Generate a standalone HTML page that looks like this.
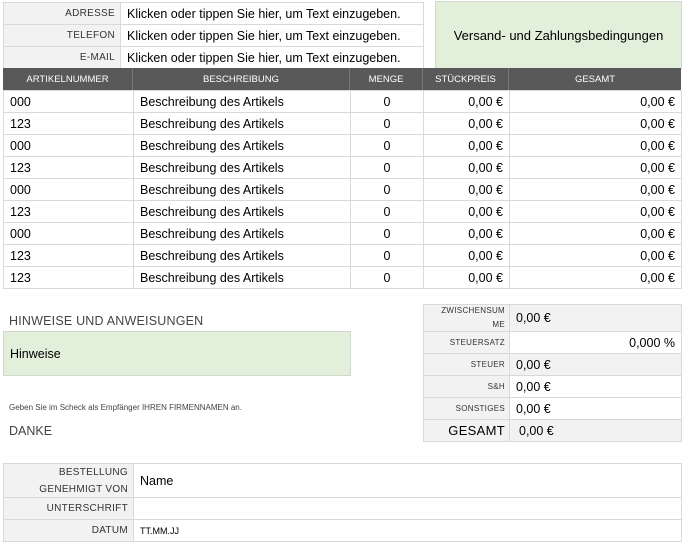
<!DOCTYPE html>
<html><head><meta charset="utf-8"><style>
*{margin:0;padding:0;box-sizing:border-box}
body{width:683px;height:543px;background:#fff;font-family:"Liberation Sans",sans-serif;color:#000;position:relative;overflow:hidden}
.c{position:absolute;border:1px solid #d9d9d9;display:flex;align-items:center;overflow:hidden;white-space:nowrap}
.g{background:#f2f2f2}
.l{justify-content:flex-end;padding-right:5px;font-size:10px;color:#333;letter-spacing:.3px}
.v{font-size:12.5px;padding-left:6px}
.r{justify-content:flex-end;padding-right:6px}
.m{justify-content:center}
.h{position:absolute;background:#595959;color:#fff;font-size:9.5px;display:flex;align-items:center;justify-content:center;border-right:1px solid #777;height:22px;top:68px}
.t{position:absolute;white-space:nowrap}
</style></head><body>
<div class="c g l" style="left:3px;top:2px;width:118px;height:23px">ADRESSE</div>
<div class="c v" style="left:120px;top:2px;width:304px;height:23px">Klicken oder tippen Sie hier, um Text einzugeben.</div>
<div class="c g l" style="left:3px;top:24px;width:118px;height:23px">TELEFON</div>
<div class="c v" style="left:120px;top:24px;width:304px;height:23px">Klicken oder tippen Sie hier, um Text einzugeben.</div>
<div class="c g l" style="left:3px;top:46px;width:118px;height:23px">E-MAIL</div>
<div class="c v" style="left:120px;top:46px;width:304px;height:23px">Klicken oder tippen Sie hier, um Text einzugeben.</div>
<div class="c m" style="left:435px;top:1px;width:247px;height:68px;background:#e2efda;font-size:13px;border-color:#d0d8cc">Versand- und Zahlungsbedingungen</div>

<div class="h" style="left:3px;width:130px">ARTIKELNUMMER</div>
<div class="h" style="left:133px;width:217px">BESCHREIBUNG</div>
<div class="h" style="left:350px;width:73px">MENGE</div>
<div class="h" style="left:423px;width:86px">STÜCKPREIS</div>
<div class="h" style="left:509px;width:172px;border:none">GESAMT</div>

<div id="rows"></div>
<script>
var ids=["000","123","000","123","000","123","000","123","123"],h="";
for(var i=0;i<9;i++){var y=90+i*22;
h+='<div class="c v" style="left:3px;top:'+y+'px;width:131px;height:23px">'+ids[i]+'</div>';
h+='<div class="c v" style="left:133px;top:'+y+'px;width:218px;height:23px">Beschreibung des Artikels</div>';
h+='<div class="c v m" style="left:350px;top:'+y+'px;width:74px;height:23px;padding:0">0</div>';
h+='<div class="c v r" style="left:423px;top:'+y+'px;width:87px;height:23px">0,00 €</div>';
h+='<div class="c v r" style="left:509px;top:'+y+'px;width:173px;height:23px">0,00 €</div>';}
document.getElementById("rows").innerHTML=h;
</script>

<div class="t" style="left:9px;top:314px;font-size:12.5px;color:#444;letter-spacing:.2px">HINWEISE UND ANWEISUNGEN</div>
<div class="c v" style="left:3px;top:331px;width:348px;height:45px;background:#e2efda;border-color:#cfd8ca;font-size:12.5px">Hinweise</div>
<div class="t" style="left:9px;top:403px;font-size:8px;color:#444">Geben Sie im Scheck als Empfänger IHREN FIRMENNAMEN an.</div>
<div class="t" style="left:9px;top:424px;font-size:12.5px;color:#444">DANKE</div>

<div class="c g l" style="left:423px;top:304px;width:87px;height:28px;font-size:8px;white-space:normal;text-align:right;line-height:14px;padding-right:4px">ZWISCHENSUM<br>ME</div>
<div class="c g v" style="left:509px;top:304px;width:173px;height:28px">0,00 €</div>
<div class="c g l" style="left:423px;top:331px;width:87px;height:23px;font-size:8px;padding-right:4px">STEUERSATZ</div>
<div class="c v r" style="left:509px;top:331px;width:173px;height:23px">0,000 %</div>
<div class="c g l" style="left:423px;top:353px;width:87px;height:23px;font-size:8px;padding-right:4px">STEUER</div>
<div class="c g v" style="left:509px;top:353px;width:173px;height:23px">0,00 €</div>
<div class="c g l" style="left:423px;top:375px;width:87px;height:23px;font-size:8px;padding-right:4px">S&amp;H</div>
<div class="c v" style="left:509px;top:375px;width:173px;height:23px">0,00 €</div>
<div class="c g l" style="left:423px;top:397px;width:87px;height:23px;font-size:8px;padding-right:4px">SONSTIGES</div>
<div class="c v" style="left:509px;top:397px;width:173px;height:23px">0,00 €</div>
<div class="c g l" style="left:423px;top:419px;width:87px;height:23px;font-size:13px;color:#000;padding-right:4px">GESAMT</div>
<div class="c g v" style="left:509px;top:419px;width:173px;height:23px;padding-left:9px">0,00 €</div>

<div class="c g l" style="left:3px;top:463px;width:131px;height:35px;font-size:10px;white-space:normal;text-align:right;line-height:17px">BESTELLUNG<br>GENEHMIGT VON</div>
<div class="c v" style="left:133px;top:463px;width:549px;height:35px">Name</div>
<div class="c g l" style="left:3px;top:497px;width:131px;height:23px">UNTERSCHRIFT</div>
<div class="c v" style="left:133px;top:497px;width:549px;height:23px"></div>
<div class="c g l" style="left:3px;top:519px;width:131px;height:23px">DATUM</div>
<div class="c v" style="left:133px;top:519px;width:549px;height:23px;font-size:9px">TT.MM.JJ</div>
</body></html>
